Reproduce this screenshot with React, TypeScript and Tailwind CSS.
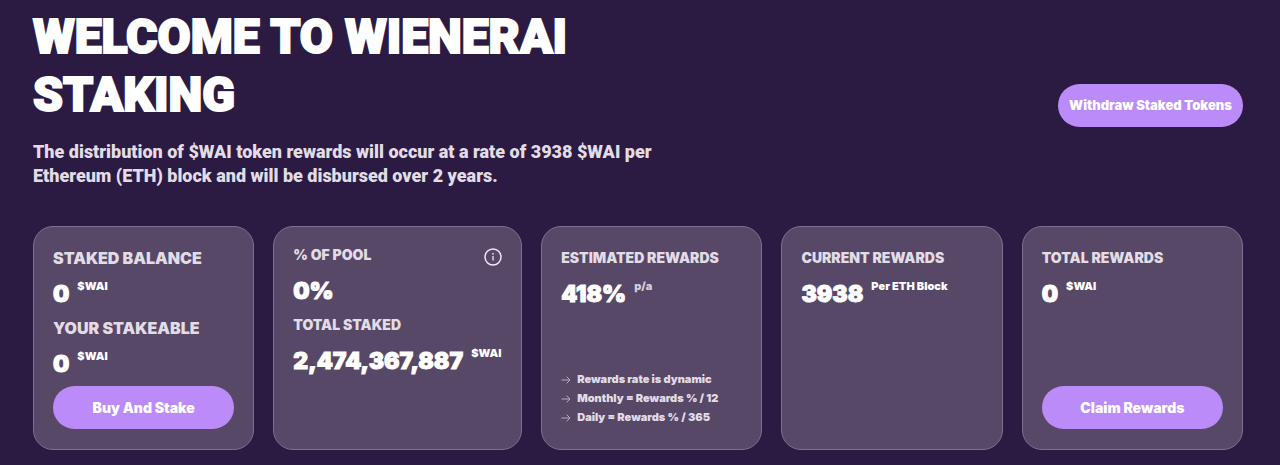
import React from "react";

interface StatProps {
  label: string;
  value: string;
  unit?: string;
  unitClassName?: string;
  labelClassName?: string;
}

const Stat: React.FC<StatProps> = ({
  label,
  value,
  unit,
  unitClassName = "text-white",
  labelClassName = "text-sm",
}) => {
  return (
    <div className="flex flex-col gap-2">
      <h2 className={`leading-6 text-[#e2dde5] uppercase whitespace-nowrap ${labelClassName}`}>{label}</h2>
      <p className="flex items-start gap-2 whitespace-nowrap">
        <span className="text-[23px] leading-8 text-white [-webkit-text-stroke:1px_currentColor]">{value}</span>
        {unit && <span className={`text-[11px] leading-4 ${unitClassName}`}>{unit}</span>}
      </p>
    </div>
  );
};

interface CardProps {
  children: React.ReactNode;
  className?: string;
}

const Card: React.FC<CardProps> = ({ children, className = "pt-[19px]" }) => {
  return (
    <section
      className={`flex min-w-0 flex-col gap-1.5 rounded-[20px] border border-[#7f708f] bg-[#574868] px-[19px] pb-5 ${className}`}
    >
      {children}
    </section>
  );
};

interface PillButtonProps {
  children: React.ReactNode;
  className?: string;
}

const PillButton: React.FC<PillButtonProps> = ({ children, className = "text-sm" }) => {
  return (
    <button
      type="button"
      className={`h-[43px] rounded-full bg-[#bb8bfa] whitespace-nowrap text-white cursor-pointer hover:bg-[#a873f0] transition-colors ${className}`}
    >
      {children}
    </button>
  );
};

const InfoIcon = () => (
  <svg viewBox="0 0 18 18" fill="none" className="size-[18px]" aria-hidden="true">
    <circle cx="9" cy="9" r="8" stroke="#f0e9f7" strokeWidth="1.5" />
    <path d="M9 8v4.4" stroke="#f0e9f7" strokeWidth="1.3" />
    <circle cx="9" cy="5.8" r="0.9" fill="#f0e9f7" />
  </svg>
);

const ArrowIcon = () => (
  <svg viewBox="0 0 10 10" fill="none" className="size-[10px] shrink-0" aria-hidden="true">
    <path d="M0.5 5h8.5M5.6 1.6 9 5 5.6 8.4" stroke="#b3a8bd" strokeWidth="1" />
  </svg>
);

const notes = ["Rewards rate is dynamic", "Monthly = Rewards % / 12", "Daily = Rewards % / 365"];

const App = () => {
  return (
    <main className="min-h-screen bg-[#2b1a42] pt-2 pr-[37px] pb-[15px] pl-[33px] font-['Inter',sans-serif] font-black">
      <header>
        <div className="flex items-end justify-between gap-6">
          <h1 className="max-w-[640px] pb-[3px] font-['Roboto',sans-serif] text-5xl leading-[58px] text-white uppercase [-webkit-text-stroke:2px_currentColor]">
            Welcome to WienerAI Staking
          </h1>
          <PillButton className="w-[185px] shrink-0 text-[13px]">Withdraw Staked Tokens</PillButton>
        </div>
        <p className="mt-[13px] max-w-[660px] font-['Roboto',sans-serif] text-lg leading-6 text-[#e2dde5]">
          The distribution of $WAI token rewards will occur at a rate of 3938 $WAI per Ethereum (ETH) block and will be
          disbursed over 2 years.
        </p>
      </header>

      <div className="mt-[38px] grid grid-cols-[8fr_9fr_8fr_8fr_8fr] gap-[19px]">
        <Card>
          <Stat label="Staked Balance" value="0" unit="$WAI" labelClassName="text-base" />
          <Stat label="Your Stakeable" value="0" unit="$WAI" labelClassName="text-base" />
          <PillButton className="mt-auto text-sm">Buy And Stake</PillButton>
        </Card>

        <Card className="pt-4">
          <div className="flex items-start justify-between">
            <Stat label="% of Pool" value="0%" />
            <button type="button" aria-label="Pool info" className="mt-[5px] cursor-pointer">
              <InfoIcon />
            </button>
          </div>
          <Stat label="Total Staked" value="2,474,367,887" unit="$WAI" />
        </Card>

        <Card>
          <Stat label="Estimated Rewards" value="418%" unit="p/a" unitClassName="text-[#d5cddb]" />
          <ul className="mt-auto pb-0.5 text-[11px] leading-[19px] text-[#e2dde5]">
            {notes.map((note) => (
              <li key={note} className="flex items-center gap-1.5 whitespace-nowrap">
                <ArrowIcon />
                {note}
              </li>
            ))}
          </ul>
        </Card>

        <Card>
          <Stat label="Current Rewards" value="3938" unit="Per ETH Block" />
        </Card>

        <Card>
          <Stat label="Total Rewards" value="0" unit="$WAI" />
          <PillButton className="mt-auto text-sm">Claim Rewards</PillButton>
        </Card>
      </div>
    </main>
  );
};

export default App;
